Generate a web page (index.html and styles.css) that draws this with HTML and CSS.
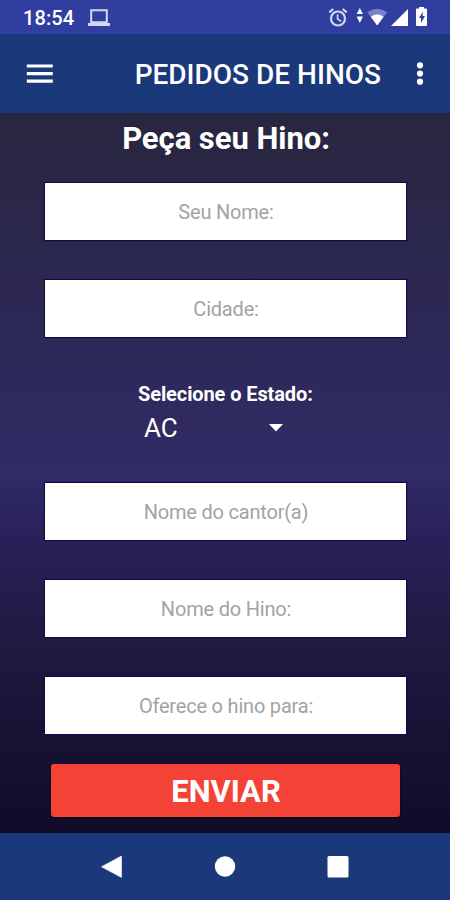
FILE: index.html
```html
<!DOCTYPE html>
<html lang="pt-BR">
<head>
<meta charset="utf-8">
<meta name="viewport" content="width=device-width, initial-scale=1">
<title>Pedidos de Hinos</title>
<link rel="stylesheet" href="styles.css">
</head>
<body>
<div class="screen">
  <div class="status-bar">
    <span class="clock">18:54</span>
    <svg class="laptop" width="22" height="18" viewBox="0 0 22 18"><path d="M3.2 1.2h15.6v12H3.2z" fill="none" stroke="#d3d6f0" stroke-width="2"/><path d="M0 14h22v2.2q0 .8-.8.8H.8Q0 17 0 16.200z" fill="#d3d6f0"/></svg>
    <svg class="status-icons" width="102" height="22" viewBox="0 0 102 22">
      <g fill="none" stroke="#d3d6f0" stroke-width="2.200"><circle cx="11" cy="11.500" r="7"/><path d="M2.300 5.300 6.300 2M19.700 5.300 15.700 2"/><path d="M10.600 7.200V12L14.200 14.400" stroke-width="1.600"/></g>
      <path d="M32.800 1 36 7H29.600zM32.800 16 29.600 9.500H36z" fill="#fff"/>
      <path d="M40.300 5.200Q50.200-1.800 60.100 5.200L50.200 18.500z" fill="#7981c9"/>
      <path d="M43.800 9.800Q50.200 4.800 56.600 9.800L50.200 18.500z" fill="#fff"/>
      <path d="M81 2V19H64z" fill="#fff"/>
      <path d="M92 0h5v1.500h2q1 0 1 1v15.500q0 1-1 1h-9q-1 0-1-1V2.500q0-1 1-1h2z" fill="#fff"/>
      <path d="M96 4.500 92 11H94v5L98 9H95.500z" fill="#303f9f"/>
    </svg>
  </div>
  <header class="app-bar">
    <svg class="menu" width="28" height="22" viewBox="0 0 28 22"><path d="M.8 3h26M.8 10.600h26M.8 18.200h26" stroke="#fff" stroke-width="3.200"/></svg>
    <h1 class="title">PEDIDOS DE HINOS</h1>
    <svg class="more" width="8" height="24" viewBox="0 0 8 24" fill="#fff"><circle cx="4" cy="3.300" r="3.100"/><circle cx="4" cy="11.500" r="3.100"/><circle cx="4" cy="19.700" r="3.100"/></svg>
  </header>
  <form class="form">
    <h2 class="heading">Peça seu Hino:</h2>
    <input class="field" type="text" placeholder="Seu Nome:" aria-label="Seu Nome">
    <input class="field" type="text" placeholder="Cidade:" aria-label="Cidade">
    <div class="state">
      <div class="state-label">Selecione o Estado:</div>
      <div class="spinner"><span>AC</span><svg width="14" height="8" viewBox="0 0 14 8"><path d="M0 0h14L7 7.500z" fill="#fff"/></svg></div>
    </div>
    <input class="field" type="text" placeholder="Nome do cantor(a)" aria-label="Nome do cantor(a)">
    <input class="field" type="text" placeholder="Nome do Hino:" aria-label="Nome do Hino">
    <input class="field" type="text" placeholder="Oferece o hino para:" aria-label="Oferece o hino para">
    <button class="send" type="button">ENVIAR</button>
  </form>
  <nav class="nav-bar">
    <svg width="24" height="26" viewBox="0 0 24 26"><path d="M21.500 2v21.500L1.500 12.800z" fill="#fff" stroke="#fff" stroke-width=".6" stroke-linejoin="round"/></svg>
    <svg width="24" height="26" viewBox="0 0 24 26"><circle cx="12" cy="12.500" r="10.200" fill="#fff"/></svg>
    <svg width="24" height="26" viewBox="0 0 24 26"><rect x="1.500" y="2" width="21" height="21.500" rx="1.500" fill="#fff"/></svg>
  </nav>
</div>
</body>
</html>
```
FILE: styles.css
```css
* { box-sizing: border-box; }
body { margin: 0; font-family: Roboto, "Liberation Sans", sans-serif; color: #fff; }
svg { display: block; flex: none; }
.screen { width: 450px; height: 900px; display: flex; flex-direction: column; overflow: hidden; }
.status-bar { height: 34px; background: #303f9f; display: flex; align-items: flex-start; padding: 7px 21px 0 23px; }
.clock { width: 65px; font-size: 20px; line-height: 22px; font-weight: 500; letter-spacing: .1px; }
.laptop { margin-top: 2px; }
.status-icons { margin-left: auto; }
.app-bar { height: 79px; background: #1a387a; display: flex; align-items: center; padding: 0 26px; }
.title { margin: 3px 0 0 auto; font-size: 28px; line-height: 34px; font-weight: 500; white-space: nowrap; }
.more { margin-left: 35px; }
.form { height: 720px; display: flex; flex-direction: column; align-items: center; padding-top: 8px; background: linear-gradient(#28263f, #2c2854 27%, #312b66 50%, #28215a 59%, #1f1a40 74%, #100b28); }
.heading { margin: 0 0 26px; padding-left: 2px; font-size: 31px; line-height: 36px; font-weight: 700; letter-spacing: -.05px; }
.field { width: 361px; height: 57px; flex: none; margin: 0 0 39.700px; padding: 1px 0 0 2px; border: 0; background: #fff; box-shadow: 0 0 1px 1px #120a47; font: 400 20px/26px Roboto, "Liberation Sans", sans-serif; letter-spacing: -.2px; text-align: center; }
.field::placeholder { color: #a3a3a3; opacity: 1; }
.state { width: 174px; height: 107px; flex: none; padding-top: 6px; }
.state-label { font-size: 20px; line-height: 24px; font-weight: 700; letter-spacing: -.1px; white-space: nowrap; }
.spinner { display: flex; align-items: center; justify-content: space-between; padding: 0 29px 0 6px; font-size: 26px; line-height: 34px; margin-top: 5px; }
.send { width: 349px; height: 53px; flex: none; margin: -9.500px 0 0; padding: 4px 0 0 2px; border: 0; border-radius: 3px; background: #f44336; color: #fff; font: 700 31px/36px Roboto, "Liberation Sans", sans-serif; box-shadow: 0 1px 2px #030014; }
.nav-bar { height: 67px; background: #1a387a; display: flex; align-items: center; justify-content: center; gap: 89px; padding-right: 1px; }
```
